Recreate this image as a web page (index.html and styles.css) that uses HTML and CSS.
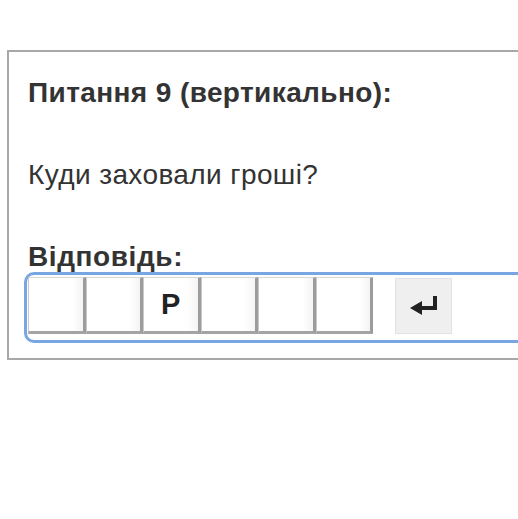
FILE: index.html
```html
<!DOCTYPE html>
<html lang="uk">
<head>
<meta charset="utf-8">
<link rel="stylesheet" href="styles.css">
</head>
<body>
<div class="panel">
  <h2 class="title">Питання 9 (вертикально):</h2>
  <p class="question">Куди заховали гроші?</p>
  <div class="answer-label">Відповідь:</div>
  <div class="answer-row">
    <div class="cells">
      <div class="cell"></div>
      <div class="cell"></div>
      <div class="cell">Р</div>
      <div class="cell"></div>
      <div class="cell"></div>
      <div class="cell"></div>
    </div>
    <button class="enter" type="button" aria-label="Enter">
      <svg width="32" height="22" viewBox="0 0 32 22">
        <path d="M27 1 V13 H13" fill="none" stroke="#222" stroke-width="4"/>
        <path d="M2 13 L14 6 L14 20 Z" fill="#222"/>
      </svg>
    </button>
  </div>
</div>
</body>
</html>
```
FILE: styles.css
```css
html, body {
  margin: 0;
  padding: 0;
  background: #fff;
  overflow: hidden;
}
body {
  width: 518px;
  height: 519px;
  font-family: "Liberation Sans", Arial, sans-serif;
  color: #333;
}
.panel {
  margin: 50px 0 0 7px;
  width: 600px;
  height: 310px;
  border: 2px solid #a8a8a8;
  border-right: none;
  padding: 0 0 0 19px;
  box-sizing: border-box;
}
.title {
  margin: 25px 0 0 0;
  font-size: 28px;
  letter-spacing: 0.4px;
  font-weight: bold;
  line-height: 32px;
}
.question {
  margin: 50px 0 0 0;
  font-size: 28px;
  letter-spacing: 0.4px;
  line-height: 32px;
}
.answer-label {
  margin: 52px 0 0 0;
  font-size: 28px;
  letter-spacing: 0.6px;
  font-weight: bold;
  line-height: 28px;
}
.answer-row {
  margin: 1px 0 0 -4px;
  display: flex;
  align-items: flex-start;
  gap: 22px;
  width: 560px;
  height: 71px;
  border: 3px solid #78a6e2;
  border-radius: 10px;
  box-sizing: border-box;
  padding: 2px 0 0 1px;
}
.cells {
  display: flex;
}
.cell {
  width: 57.5px;
  height: 57px;
  box-sizing: border-box;
  border-top: 1px solid #d8d8d8;
  border-left: 1px solid #c8c8c8;
  border-right: 3px solid #9c9c9c;
  border-bottom: 3px solid #a4a4a4;
  background: linear-gradient(to right, #fff 80%, #f4f4f4);
  display: flex;
  align-items: center;
  justify-content: center;
  font-size: 29px;
  font-weight: bold;
  color: #222;
}
.enter {
  width: 57px;
  height: 56px;
  margin-top: 1px;
  background: #efefef;
  border: 1px solid #e2e2e2;
  display: flex;
  align-items: center;
  justify-content: center;
  padding: 0;
}
```
